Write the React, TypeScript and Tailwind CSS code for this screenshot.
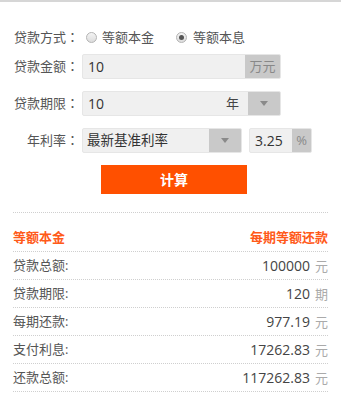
import React from "react";

const Radio = ({ checked }: { checked?: boolean }) => (
  <span className="relative inline-flex h-[11px] w-[11px] items-center justify-center rounded-full border border-[#b4b4b4] bg-gradient-to-b from-[#f4f4f4] to-[#dcdcdc]">
    {checked && <span className="h-[5px] w-[5px] rounded-full bg-[#555]" />}
  </span>
);

const Tri = () => (
  <svg width="8" height="5" viewBox="0 0 8 5">
    <path d="M0 0H8L4 5Z" fill="#8a8a8a" />
  </svg>
);

const Label = ({ children }: { children: React.ReactNode }) => (
  <div className="w-[65px] shrink-0 text-right text-[13px] text-[#555] whitespace-nowrap">
    {children}
    <span style={{ fontFamily: '"Noto Sans CJK TC",sans-serif' }}>：</span>
  </div>
);

const rows: [string, string, string][] = [
  ["贷款总额:", "100000", "元"],
  ["贷款期限:", "120", "期"],
  ["每期还款:", "977.19", "元"],
  ["支付利息:", "17262.83", "元"],
  ["还款总额:", "117262.83", "元"],
];

export default function App() {
  return (
    <div
      className="w-[341px] h-[400px] overflow-hidden bg-white border-t-2 border-[#d6d6d6]"
      style={{ fontFamily: '"Open Sans","Noto Sans CJK SC",sans-serif' }}
    >
      <div className="pl-[14px] pt-[23px]">
        <div className="flex h-[25px] items-center">
          <Label>贷款方式</Label>
          <div className="ml-[7px] flex items-center">
            <Radio />
            <span className="ml-[5px] text-[13px] text-[#555]">等额本金</span>
          </div>
          <div className="ml-[22px] flex items-center">
            <Radio checked />
            <span className="ml-[6px] text-[13px] text-[#555]">等额本息</span>
          </div>
        </div>

        <div className="mt-[4px] flex h-[25px] items-center">
          <Label>贷款金额</Label>
          <div className="ml-[3px] flex h-[25px] w-[199px] overflow-hidden rounded-[2px] border border-[#e6e6e6] bg-[#f0f0f0]">
            <div className="flex flex-1 items-center pl-[5px] text-[14px] text-[#333]">10</div>
            <div className="flex w-[35px] items-center justify-center bg-[#c9c9c9] text-[13px] text-[#888]">万元</div>
          </div>
        </div>

        <div className="mt-[12px] flex h-[25px] items-center">
          <Label>贷款期限</Label>
          <div className="ml-[3px] flex h-[25px] w-[199px] overflow-hidden rounded-[2px] border border-[#e6e6e6] bg-[#f0f0f0]">
            <div className="flex flex-1 items-center pl-[5px] text-[14px] text-[#333]">10</div>
            <div className="flex items-center pr-[9px] text-[13px] text-[#444]">年</div>
            <div className="flex w-[32px] items-center justify-center bg-[#c9c9c9]">
              <Tri />
            </div>
          </div>
        </div>

        <div className="mt-[12px] flex h-[25px] items-center">
          <Label>年利率</Label>
          <div className="ml-[3px] flex h-[25px] w-[160px] overflow-hidden rounded-[2px] border border-[#e6e6e6] bg-[#f0f0f0]">
            <div className="flex flex-1 items-center pl-[4px] text-[13.5px] text-[#333]">最新基准利率</div>
            <div className="flex w-[32px] items-center justify-center bg-[#c9c9c9]">
              <Tri />
            </div>
          </div>
          <div className="ml-[7px] flex h-[25px] w-[63px] overflow-hidden rounded-[2px] border border-[#e6e6e6] bg-[#f0f0f0]">
            <div className="flex flex-1 items-center pl-[5px] text-[14px] text-[#333]">3.25</div>
            <div className="flex w-[19px] items-center justify-center bg-[#c9c9c9] text-[13px] text-[#888]">%</div>
          </div>
        </div>

        <div className="mt-[12px] flex">
          <button className="ml-[87px] flex h-[29px] w-[146px] items-center justify-center bg-[#ff5000] text-[14px] font-bold text-white">
            计算
          </button>
        </div>
      </div>

      <div className="mx-[13px] mt-[18px] border-t border-dotted border-[#cfcfcf]">
        <div className="flex h-[39px] items-start justify-between border-b border-dotted border-[#cfcfcf] pt-[14px] text-[13px] font-bold leading-[20px] text-[#ff5a1a]">
          <span>等额本金</span>
          <span>每期等额还款</span>
        </div>
        {rows.map(([l, v, u]) => (
          <div
            key={l}
            className="flex h-[28px] items-center justify-between border-b border-dotted border-[#cfcfcf] text-[13px]"
          >
            <span className="text-[#555]">{l}</span>
            <span>
              <span className="text-[14px] text-[#444]">{v}</span>
              <span className="ml-[5px] text-[#aaa]">{u}</span>
            </span>
          </div>
        ))}
      </div>
    </div>
  );
}
